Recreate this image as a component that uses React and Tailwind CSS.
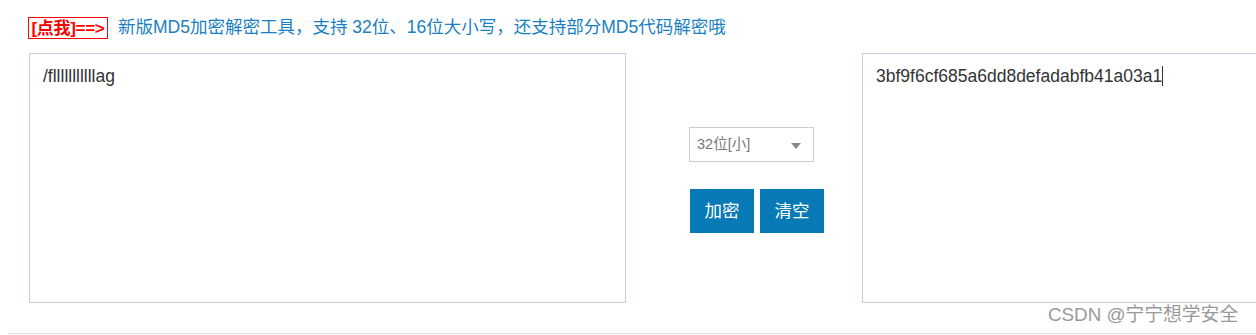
import React, { useState } from "react";

const App = () => {
  const [input, setInput] = useState("/flllllllllllag");
  const [mode, setMode] = useState("32位[小]");

  return (
    <div
      className="relative w-[1256px] h-[335px] overflow-hidden bg-white"
      style={{ fontFamily: '"Liberation Sans", "Noto Sans CJK SC", sans-serif' }}
    >
      {/* Title */}
      <div className="flex items-center pt-[17px] pl-[28px] h-[39px]">
        <span className="border border-[#ff0000] h-[22px] w-[80px] shrink-0 flex items-center justify-center text-[#ff0000] font-bold text-[17px] leading-none tracking-[-0.3px]">
          [点我]==&gt;
        </span>
        <span className="ml-[10px] text-[#1a7fc1] text-[17.5px] leading-none whitespace-nowrap">
          新版MD5加密解密工具，支持 32位、16位大小写，还支持部分MD5代码解密哦
        </span>
      </div>

      {/* Main row */}
      <div className="flex mt-[14px] pl-[29px]">
        <textarea
          value={input}
          onChange={(e) => setInput(e.target.value)}
          className="w-[597px] h-[250px] shrink-0 border border-[#c5cedb] px-[13px] py-[11px] text-[17.5px] leading-[22px] text-[#333] resize-none outline-none"
        />

        <div className="w-[236px] shrink-0 flex flex-col pl-[63px] pt-[74px]">
          <div className="relative w-[125px] h-[35px] border border-[#c9ced6] flex items-center pl-[7px] text-[14.5px] text-[#777]">
            {mode}
            <span className="absolute right-[12px] top-[15px] w-0 h-0 border-l-[5px] border-r-[5px] border-t-[6px] border-l-transparent border-r-transparent border-t-[#888]" />
          </div>
          <div className="flex mt-[27px] ml-[1px] gap-[6px]">
            <button className="w-[64px] h-[44px] bg-[#0779b5] text-white text-[17.5px]">
              加密
            </button>
            <button
              onClick={() => setInput("")}
              className="w-[64px] h-[44px] bg-[#0779b5] text-white text-[17.5px]"
            >
              清空
            </button>
          </div>
        </div>

        <div className="w-[420px] shrink-0 h-[250px] border border-[#c5cedb] px-[13px] py-[11px] text-[17.5px] leading-[22px] text-[#333]">
          3bf9f6cf685a6dd8defadabfb41a03a1
          <span className="inline-block w-px h-[20px] bg-[#333] align-[-4px]" />
        </div>
      </div>

      {/* Watermark */}
      <div className="absolute left-[1048px] top-[304px] text-[18.8px] text-[#999] leading-[22px] whitespace-nowrap">
        CSDN @宁宁想学安全
      </div>

      {/* Bottom line */}
      <div className="absolute left-[8px] right-0 top-[333px] h-[1px] bg-[#e0e0e0]" />
    </div>
  );
};

export default App;
